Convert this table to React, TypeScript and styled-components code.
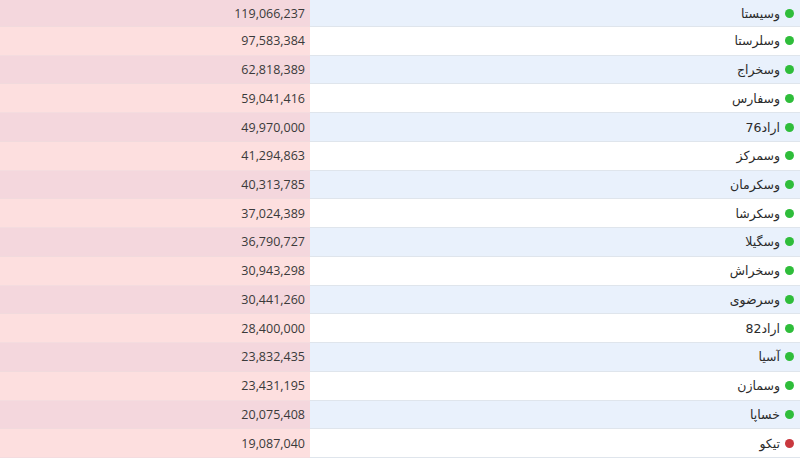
import React from "react";
import styled, { createGlobalStyle } from "styled-components";

const Global = createGlobalStyle`
  html, body { margin: 0; padding: 0; background: #ffffff; }
  #root { width: 800px; height: 458px; overflow: hidden; }
`;

type Row = { name: string; value: string; up: boolean };

const rows: Row[] = [
  { name: "وسیستا", value: "119,066,237", up: true },
  { name: "وسلرستا", value: "97,583,384", up: true },
  { name: "وسخراج", value: "62,818,389", up: true },
  { name: "وسفارس", value: "59,041,416", up: true },
  { name: "اراد76", value: "49,970,000", up: true },
  { name: "وسمرکز", value: "41,294,863", up: true },
  { name: "وسکرمان", value: "40,313,785", up: true },
  { name: "وسکرشا", value: "37,024,389", up: true },
  { name: "وسگیلا", value: "36,790,727", up: true },
  { name: "وسخراش", value: "30,943,298", up: true },
  { name: "وسرضوی", value: "30,441,260", up: true },
  { name: "اراد82", value: "28,400,000", up: true },
  { name: "آسیا", value: "23,832,435", up: true },
  { name: "وسمازن", value: "23,431,195", up: true },
  { name: "خساپا", value: "20,075,408", up: true },
  { name: "تیکو", value: "19,087,040", up: false },
];

const Table = styled.div`
  display: grid;
  grid-template-columns: 310px 1fr;
  grid-template-rows: 27px repeat(15, 1fr);
  width: 800px;
  height: 458px;
`;

const ValueCell = styled.div<{ $odd: boolean }>`
  display: flex;
  align-items: center;
  justify-content: flex-end;
  padding-right: 5px;
  background: ${(p) => (p.$odd ? "#f4d7dd" : "#fddfdf")};
  border-bottom: 1px solid ${(p) => (p.$odd ? "#f1dadd" : "#f4dcdf")};
  font-family: "Open Sans", "Noto Sans", sans-serif;
  font-size: 12.5px;
  color: #3a3a3a;
  box-sizing: border-box;
`;

const NameCell = styled.div<{ $odd: boolean }>`
  display: flex;
  direction: rtl;
  align-items: center;
  gap: 5px;
  padding-right: 5px;
  background: ${(p) => (p.$odd ? "#e9f1fc" : "#ffffff")};
  border-bottom: 1px solid #dfe5ec;
  font-family: "DejaVu Sans", "Liberation Sans", sans-serif;
  font-size: 12.5px;
  color: #2b2b2b;
  box-sizing: border-box;
`;

const Dot = styled.span<{ $up: boolean }>`
  width: 9px;
  height: 9px;
  margin-right: 1px;
  border-radius: 50%;
  background: ${(p) => (p.$up ? "#2fbd3a" : "#c9383e")};
  flex: none;
`;

export default function App() {
  return (
    <>
      <Global />
      <Table>
        {rows.map((r, i) => (
          <React.Fragment key={r.name}>
            <ValueCell $odd={i % 2 === 0}>{r.value}</ValueCell>
            <NameCell $odd={i % 2 === 0}>
              <Dot $up={r.up} />
              <span>{r.name}</span>
            </NameCell>
          </React.Fragment>
        ))}
      </Table>
    </>
  );
}
